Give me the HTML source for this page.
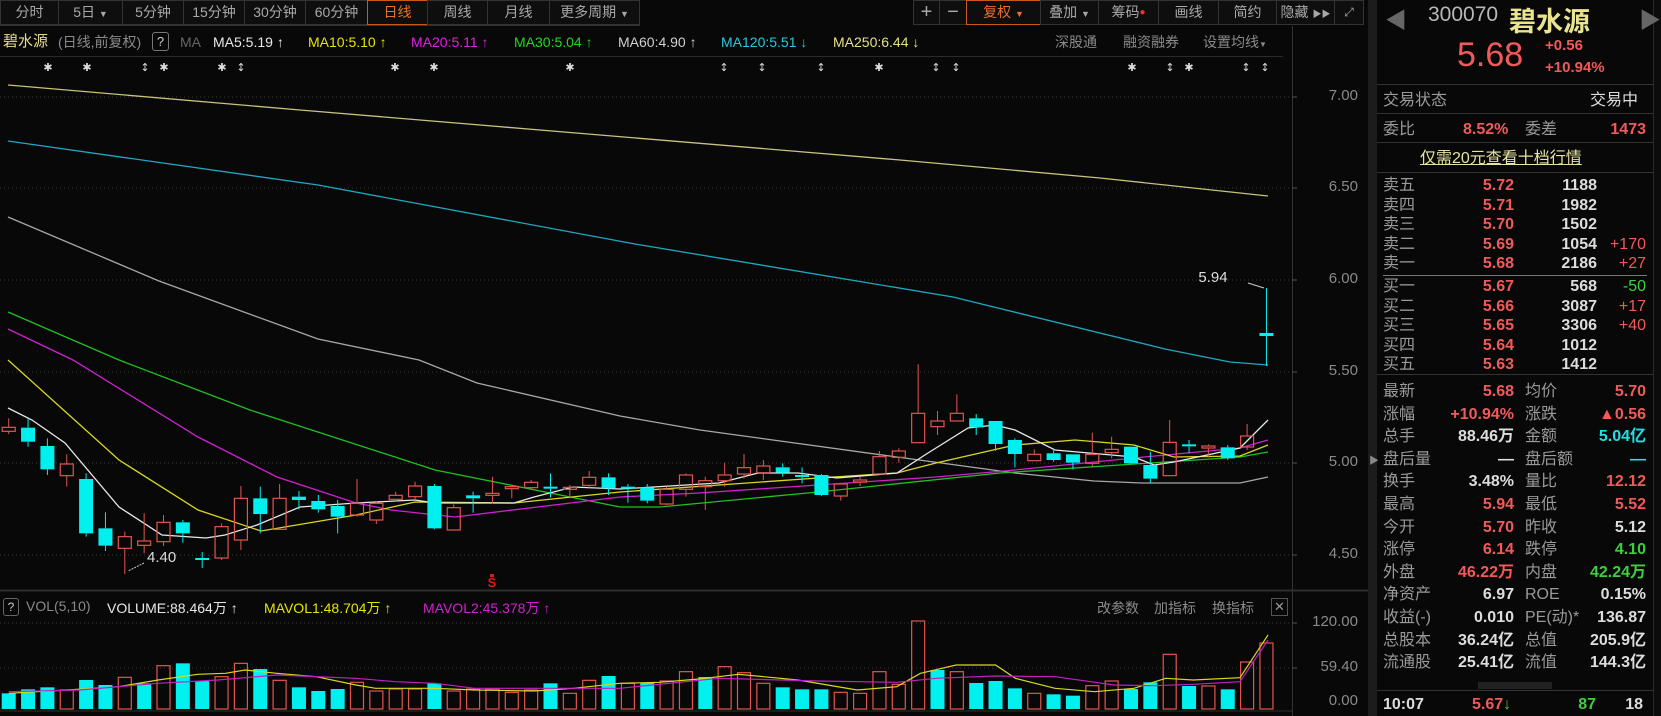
<!DOCTYPE html>
<html><head><meta charset="utf-8">
<style>
*{margin:0;padding:0;box-sizing:border-box}
body{width:1661px;height:716px;background:#080808;overflow:hidden;position:relative;font-family:"Liberation Sans","Noto Sans CJK SC",sans-serif;color:#bbb}
.a{position:absolute;white-space:nowrap}
.tab{position:absolute;top:0;height:25px;border:1px solid #333;background:#0e0e0e;color:#a8a8a8;font-size:14px;line-height:23px;text-align:center}
.leg{position:absolute;top:33px;font-size:14px;line-height:18px;white-space:nowrap}
.rp{position:absolute;font-size:16px;line-height:20px;white-space:nowrap}
.lb{color:#9a9a9a}
.rd{color:#f25a5a;font-weight:bold}
.wt{color:#ddd;font-weight:bold}
.gn{color:#3ecf3e;font-weight:bold}
.cy{color:#1fe0e8;font-weight:bold}
.ax{position:absolute;right:303px;font-size:15px;color:#8a8a8a;text-align:right}
</style></head><body>

<!-- toolbar -->
<div class="tab" style="left:0;width:59px">分时</div>
<div class="tab" style="left:58px;width:65px">5日 <span style="font-size:9px">▼</span></div>
<div class="tab" style="left:122px;width:62px">5分钟</div>
<div class="tab" style="left:183px;width:62px">15分钟</div>
<div class="tab" style="left:244px;width:62px">30分钟</div>
<div class="tab" style="left:305px;width:63px">60分钟</div>
<div class="tab" style="left:367px;width:61px;color:#e8702a;border-color:#c85a1e">日线</div>
<div class="tab" style="left:427px;width:61px">周线</div>
<div class="tab" style="left:487px;width:63px">月线</div>
<div class="tab" style="left:549px;width:91px">更多周期 <span style="font-size:9px">▼</span></div>
<div style="position:absolute;left:0;top:25px;width:640px;height:1px;background:#333"></div>

<div class="tab" style="left:913px;width:27px;font-size:20px">+</div>
<div class="tab" style="left:939px;width:28px;font-size:20px">−</div>
<div class="tab" style="left:966px;width:75px;color:#e8702a;border-color:#c85a1e">复权 <span style="font-size:9px">▼</span></div>
<div class="tab" style="left:1040px;width:59px">叠加 <span style="font-size:9px">▼</span></div>
<div class="tab" style="left:1098px;width:61px">筹码<span style="color:#f03030;font-size:10px;vertical-align:top">●</span></div>
<div class="tab" style="left:1158px;width:61px">画线</div>
<div class="tab" style="left:1218px;width:59px">简约</div>
<div class="tab" style="left:1276px;width:59px">隐藏 <span style="font-size:9px">▶▶</span></div>
<div class="tab" style="left:1334px;width:30px;font-size:12px">⤢</div>

<!-- legend -->
<div class="leg" style="left:3px;color:#e6dd8c;font-size:15px">碧水源</div>
<div class="leg" style="left:58px;color:#8a8a8a">(日线,前复权)</div>
<div class="leg" style="left:152px;top:32px;width:17px;height:19px;border:1px solid #777;border-radius:3px;color:#ccc;text-align:center;font-size:13px">?</div>
<div class="leg" style="left:180px;color:#666">MA</div>
<div class="leg" style="left:213px;color:#e8e8e8">MA5:5.19 ↑</div>
<div class="leg" style="left:308px;color:#e6e600">MA10:5.10 ↑</div>
<div class="leg" style="left:411px;color:#e020e0">MA20:5.11 ↑</div>
<div class="leg" style="left:514px;color:#22d822">MA30:5.04 ↑</div>
<div class="leg" style="left:618px;color:#cfcfcf">MA60:4.90 ↑</div>
<div class="leg" style="left:721px;color:#28c8e0">MA120:5.51 ↓</div>
<div class="leg" style="left:833px;color:#e6e080">MA250:6.44 ↓</div>
<div class="leg" style="left:1055px;color:#8a8a8a">深股通</div>
<div class="leg" style="left:1123px;color:#8a8a8a">融资融券</div>
<div class="leg" style="left:1203px;color:#8a8a8a">设置均线<span style="font-size:8px">▼</span></div>
<div style="position:absolute;left:0;top:56px;width:1283px;height:1px;background:#2a2a2a"></div>

<!-- chart svg -->
<svg id="ch" class="a" style="left:0;top:0" width="1377" height="716" xmlns="http://www.w3.org/2000/svg"></svg>

<!-- price axis labels -->
<div class="ax" style="top:87px">7.00</div>
<div class="ax" style="top:178px">6.50</div>
<div class="ax" style="top:270px">6.00</div>
<div class="ax" style="top:362px">5.50</div>
<div class="ax" style="top:453px">5.00</div>
<div class="ax" style="top:545px">4.50</div>
<div class="ax" style="top:613px">120.00</div>
<div class="ax" style="top:658px">59.40</div>
<div class="ax" style="top:692px">0.00</div>

<!-- vol header -->
<div class="a" style="left:3px;top:598px;width:16px;height:18px;border:1px solid #666;border-radius:3px;color:#ccc;font-size:12px;text-align:center;line-height:16px">?</div>
<div class="a" style="left:26px;top:598px;font-size:14px;color:#8a8a8a">VOL(5,10)</div>
<div class="a" style="left:107px;top:598px;font-size:14px;color:#e8e8e8">VOLUME:88.464万 ↑</div>
<div class="a" style="left:264px;top:598px;font-size:14px;color:#e6e600">MAVOL1:48.704万 ↑</div>
<div class="a" style="left:423px;top:598px;font-size:14px;color:#d020d0">MAVOL2:45.378万 ↑</div>
<div class="a" style="left:1097px;top:598px;font-size:14px;color:#8a8a8a">改参数</div>
<div class="a" style="left:1154px;top:598px;font-size:14px;color:#8a8a8a">加指标</div>
<div class="a" style="left:1212px;top:598px;font-size:14px;color:#8a8a8a">换指标</div>
<div class="a" style="left:1271px;top:598px;width:17px;height:18px;border:1px solid #555;color:#999;font-size:13px;text-align:center;line-height:16px">✕</div>

<!-- right panel -->
<div class="a" style="left:1368px;top:0;width:9px;height:716px;background:#1c1c1c"></div>
<div class="a" style="left:1369px;top:452px;color:#888;font-size:10px">▶</div>
<div class="a" style="left:1653px;top:0;width:8px;height:716px;background:#0c0c0c;border-left:1px solid #2a2a2a"></div>
<div class="a" style="left:1385px;top:3px;color:#666;font-size:22px">◀</div>
<div class="a" style="left:1639px;top:3px;color:#666;font-size:22px">▶</div>
<div class="a" style="left:1428px;top:3px;color:#b8b8b8;font-size:21px">300070</div>
<div class="a" style="left:1509px;top:0px;color:#e8e490;font-size:27px;font-weight:bold">碧水源</div>
<div class="a" style="left:1457px;top:36px;color:#f25a5a;font-size:34px">5.68</div>
<div class="a" style="left:1545px;top:37px;color:#f25a5a;font-size:15px;font-weight:bold">+0.56</div>
<div class="a" style="left:1545px;top:59px;color:#f25a5a;font-size:15px;font-weight:bold">+10.94%</div>
<div class="a" style="left:1377px;top:84px;width:276px;height:1px;background:#333"></div>
<div class="rp lb" style="left:1383px;top:91px">交易状态</div>
<div class="rp" style="left:1590px;top:91px;color:#ddd">交易中</div>
<div class="a" style="left:1377px;top:113px;width:276px;height:1px;background:#333"></div>
<div class="rp lb" style="left:1383px;top:120px">委比</div>
<div class="rp rd" style="left:1463px;top:120px">8.52%</div>
<div class="rp lb" style="left:1525px;top:120px">委差</div>
<div class="rp rd" style="right:15px;top:120px">1473</div>
<div class="a" style="left:1377px;top:142px;width:276px;height:1px;background:#333"></div>
<div class="rp" style="left:1420px;top:149px;color:#e6e3a0;text-decoration:underline">仅需20元查看十档行情</div>
<div class="a" style="left:1377px;top:172px;width:276px;height:1px;background:#333"></div>
<div id="ob"></div>
<div class="a" style="left:1383px;top:275px;width:264px;height:1px;background:#777"></div>
<div class="a" style="left:1377px;top:374px;width:276px;height:1px;background:#333"></div>
<div id="st"></div>
<div class="a" style="left:1478px;top:682px;width:74px;height:7px;background:#222"></div>
<div class="a" style="left:1377px;top:690px;width:276px;height:1px;background:#333"></div>
<div class="rp wt" style="left:1383px;top:695px">10:07</div>
<div class="rp rd" style="left:1472px;top:695px">5.67<span style="color:#3ecf3e">↓</span></div>
<div class="rp gn" style="right:65px;top:695px">87</div>
<div class="rp wt" style="right:18px;top:695px">18</div>

<script>
var ob=[["卖五","5.72","1188",""],["卖四","5.71","1982",""],["卖三","5.70","1502",""],["卖二","5.69","1054","+170"],["卖一","5.68","2186","+27"],
["买一","5.67","568","-50"],["买二","5.66","3087","+17"],["买三","5.65","3306","+40"],["买四","5.64","1012",""],["买五","5.63","1412",""]];
var h="";
ob.forEach(function(r,i){var y=(i<5?176+i*19.5:277+(i-5)*19.5);
h+='<div class="rp lb" style="left:1383px;top:'+y+'px">'+r[0]+'</div>';
h+='<div class="rp rd" style="right:147px;top:'+y+'px">'+r[1]+'</div>';
h+='<div class="rp wt" style="right:64px;top:'+y+'px">'+r[2]+'</div>';
if(r[3])h+='<div class="rp" style="right:15px;top:'+y+'px;color:'+(r[3][0]=='-'?'#3ecf3e':'#f25a5a')+'">'+r[3]+'</div>';});
document.getElementById('ob').innerHTML=h;
var st=[["最新","5.68","rd","均价","5.70","rd"],["涨幅","+10.94%","rd","涨跌","▲0.56","rd"],["总手","88.46万","wt","金额","5.04亿","cy"],
["盘后量","—","wt","盘后额","—","cy"],["换手","3.48%","wt","量比","12.12","rd"],["最高","5.94","rd","最低","5.52","rd"],["今开","5.70","rd","昨收","5.12","wt"],
["涨停","6.14","rd","跌停","4.10","gn"],["外盘","46.22万","rd","内盘","42.24万","gn"],["净资产","6.97","wt","ROE","0.15%","wt"],
["收益(-)","0.010","wt","PE(动)*","136.87","wt"],["总股本","36.24亿","wt","总值","205.9亿","wt"],["流通股","25.41亿","wt","流值","144.3亿","wt"]];
h="";
st.forEach(function(r,i){var y=382+i*22.6;
h+='<div class="rp lb" style="left:1383px;top:'+y+'px">'+r[0]+'</div>';
h+='<div class="rp '+r[2]+'" style="right:147px;top:'+y+'px">'+r[1]+'</div>';
h+='<div class="rp lb" style="left:1525px;top:'+y+'px">'+r[3]+'</div>';
h+='<div class="rp '+r[5]+'" style="right:15px;top:'+y+'px">'+r[4]+'</div>';});
document.getElementById('st').innerHTML=h;

var s="";
function X(i){return 8.7+19.35*i}
// grid
[97,188,280,372,463,555].forEach(function(y){s+='<line x1="0" x2="1292" y1="'+y+'" y2="'+y+'" stroke="#3a3a3a" stroke-dasharray="1,3"/>';});
[623,668].forEach(function(y){s+='<line x1="0" x2="1292" y1="'+y+'" y2="'+y+'" stroke="#3a3a3a" stroke-dasharray="1,3"/>';});
s+='<line x1="1292.5" x2="1292.5" y1="26" y2="716" stroke="#333"/>';
s+='<line x1="0" x2="1368" y1="590.5" y2="590.5" stroke="#2e2e2e" stroke-width="2"/>';
s+='<line x1="0" x2="1292" y1="711" y2="711" stroke="#2e2e2e"/>';
[97,188,280,372,463,555,623,668].forEach(function(y){s+='<line x1="1292" x2="1297" y1="'+y+'" y2="'+y+'" stroke="#555"/>';});
// lines
function pl(p,c,w){s+='<polyline fill="none" stroke="'+c+'" stroke-width="'+(w||1.3)+'" points="'+p+'"/>';}
pl("8,85 300,110 600,135 900,160 1100,178 1268,196","#c8c27a");
pl("8,141 318,185 635,244 953,297 1165,349 1230,362 1268,365","#1fa8c0");
pl("8,217 159,281 318,339 419,360 477,383 620,416 700,430 897,457 1015,473 1094,481 1142,483 1240,483 1268,477","#a8a8a8");
pl("8,312 119,360 250,410 435,470 620,507 660,507 818,492 1000,473 1240,457 1268,452","#20c020");
pl("8,329 73,360 198,437 277,477 356,503 391,510 455,517 620,497 699,493 818,485 936,477 1015,470 1134,458 1240,448 1268,440","#d020d0");
pl("8,360 119,460 198,510 261,531 356,515 415,502 514,503 620,492 719,485 818,478 897,473 936,463 1015,445 1075,440 1134,445 1174,457 1240,456 1268,445","#d8d820");
pl("8,408 32,420 65,443 119,507 162,535 206,538 225,535 257,525 300,507 356,503 415,500 435,503 514,503 534,497 573,487 620,489 719,483 758,473 798,473 837,478 897,473 928,453 968,428 995,425 1015,430 1055,450 1134,457 1154,465 1174,462 1240,448 1268,420","#e8e8e8");
// candles
var Z5=[[202,214,175,222,'r'],[203,245,175,260,'c'],[258,328,235,345,'c'],[312,347,283,380,'r'],[357,520,340,530,'c'],[505,557,457,573,'c'],[530,565,515,642,'r'],[543,556,460,580,'r'],[487,545,465,558,'r'],[487,520,480,548,'c'],[594,596,576,624,'c'],[500,594,490,600,'r'],[415,540,378,570,'r'],[415,462,380,520,'c'],[415,508,372,508,'r'],[410,420,393,448,'c'],[423,448,405,458,'c'],[438,470,420,520,'c'],[430,465,357,470,'r'],[430,480,425,492,'r'],[406,418,395,425,'r'],[378,410,365,420,'r'],[378,505,372,508,'c'],[443,510,433,510,'r'],[406,415,395,458,'c'],[400,403,350,430,'r'],[380,384,378,415,'r'],[367,383,360,390,'r'],[380,382,340,412,'c'],[382,386,375,415,'r'],[352,376,333,385,'r'],[352,385,340,405,'c']];
var Z6=[[470,475,462,518,'c'],[472,512,462,520,'c'],[478,522,470,525,'r'],[435,478,430,500,'r'],[452,470,440,540,'r'],[435,452,398,470,'r'],[413,432,372,445,'r'],[408,428,390,450,'r'],[412,428,400,440,'c'],[435,437,412,460,'c'],[435,495,432,498,'c'],[462,498,462,512,'r'],[450,455,440,468,'r'],[380,432,363,432,'r'],[363,382,355,398,'r'],[250,338,103,338,'r'],[273,290,243,315,'r'],[250,273,193,273,'r'],[265,292,252,315,'c'],[273,342,273,362,'c'],[330,372,325,412,'c'],[373,392,358,392,'r'],[370,390,355,395,'c'],[373,398,373,418,'c'],[373,400,308,410,'r'],[358,368,320,385,'r'],[350,400,350,402,'c'],[405,446,365,460,'c'],[337,437,270,437,'r'],[343,347,330,370,'c'],[348,353,343,383,'r'],[352,385,345,390,'c']];
var C=[];
Z5.forEach(function(a){C.push([360+a[0]/3,360+a[1]/3,360+a[2]/3,360+a[3]/3,a[4]]);});
Z6.forEach(function(a){C.push([330+a[0]/3,330+a[1]/3,330+a[2]/3,330+a[3]/3,a[4]]);});
C.push([436,447,424,450,'r']);C.push([333,336,288,366,'c']);
C.forEach(function(c,i){var x=X(i);var red=c[4]=='r';var col=red?'#e2554f':'#00f0f0';
var t=c[0],b=c[1];if(b-t<2){b=t+2;}
s+='<line x1="'+x+'" x2="'+x+'" y1="'+c[2]+'" y2="'+t+'" stroke="'+col+'"/>';
s+='<line x1="'+x+'" x2="'+x+'" y1="'+b+'" y2="'+c[3]+'" stroke="'+col+'"/>';
if(red)s+='<rect x="'+(x-6.5)+'" y="'+t+'" width="13" height="'+(b-t)+'" fill="none" stroke="'+col+'" stroke-width="1.2"/>';
else s+='<rect x="'+(x-7)+'" y="'+t+'" width="14" height="'+(b-t)+'" fill="'+col+'"/>';});
// volumes
var V=[[415,'c'],[403,'c'],[397,'c'],[405,'r'],[375,'c'],[390,'c'],[367,'r'],[385,'c'],[332,'r'],[325,'c'],[378,'c'],[365,'r'],[325,'r'],[342,'c'],[376,'r'],[397,'c'],[408,'c'],[402,'c'],[382,'r'],[408,'r'],[402,'r'],[402,'r'],[385,'c'],[408,'r'],[402,'r'],[402,'r'],[412,'r'],[405,'r'],[385,'c'],[415,'r'],[376,'r'],[363,'c'],
[385,'r'],[383,'c'],[378,'r'],[350,'r'],[366,'c'],[335,'r'],[353,'r'],[385,'r'],[397,'c'],[403,'c'],[403,'c'],[412,'r'],[415,'r'],[350,'r'],[388,'r'],[198,'r'],[345,'c'],[350,'r'],[384,'c'],[378,'c'],[400,'c'],[415,'r'],[418,'c'],[422,'c'],[392,'r'],[378,'r'],[402,'c'],[382,'c'],[298,'r'],[393,'c'],[393,'r'],[403,'c'],[321,'r'],[264,'r']];
V.forEach(function(v,i){var x=X(i);var y=555+v[0]/3;var bt=709;
if(v[1]=='c')s+='<rect x="'+(x-7)+'" y="'+y+'" width="14" height="'+(bt-y)+'" fill="#00f0f0"/>';
else s+='<rect x="'+(x-6.5)+'" y="'+y+'" width="13" height="'+(bt-y)+'" fill="none" stroke="#e2554f" stroke-width="1.2"/>';});
function zp(arr,off){return arr.map(function(p){return (off+p[0]/2.529).toFixed(1)+','+(555+p[1]/3).toFixed(1);}).join(' ');}
pl(zp([[22,415],[170,405],[300,395],[400,375],[500,358],[570,355],[620,345],[700,355],[800,365],[900,390],[950,400],[1100,400],[1200,405],[1350,408],[1450,400],[1568,385]],0)+' '+zp([[100,382],[200,372],[300,358],[450,375],[600,405],[700,395],[760,355],[850,330],[950,330],[1000,370],[1100,400],[1200,410],[1300,400],[1380,370],[1450,375],[1568,368]],620)+' 1268,635',"#d8d820",1.2);
pl(zp([[22,410],[200,405],[400,385],[550,375],[700,360],[900,370],[1000,380],[1100,385],[1200,400],[1568,400]],0)+' '+zp([[250,370],[500,378],[700,382],[800,370],[950,363],[1100,365],[1250,390],[1350,392],[1450,388],[1568,380]],620)+' 1268,640',"#c020c0",1.2);
// markers
var stars=[[48,'✱'],[87,'✱'],[145,'↕'],[164,'✱'],[222,'✱'],[241,'↕'],[395,'✱'],[434,'✱'],[570,'✱'],[724,'↕'],[762,'↕'],[821,'↕'],[879,'✱'],[936,'↕'],[956,'↕'],[1132,'✱'],[1170,'↕'],[1189,'✱'],[1246,'↕'],[1265,'↕']];
stars.forEach(function(m){s+='<text x="'+m[0]+'" y="71" fill="#ddd" font-size="11" text-anchor="middle" font-family="DejaVu Sans">'+m[1]+'</text>';});
s+='<text x="147" y="562" fill="#ddd" font-size="15" font-family="Liberation Sans">4.40</text>';
s+='<line x1="144" y1="563" x2="128" y2="571" stroke="#ccc" stroke-dasharray="2,1"/>';
s+='<text x="1213" y="282" fill="#ddd" font-size="15" text-anchor="middle" font-family="Liberation Sans">5.94</text>';
s+='<line x1="1248" y1="283" x2="1264" y2="288" stroke="#ccc"/>';
s+='<text x="492" y="587" fill="#e01818" font-size="13" font-weight="bold" text-anchor="middle" font-family="Liberation Sans">S</text>';
s+='<rect x="490" y="574" width="4" height="3" fill="#e01818"/>';
document.getElementById('ch').innerHTML=s;
</script>
</body></html>
